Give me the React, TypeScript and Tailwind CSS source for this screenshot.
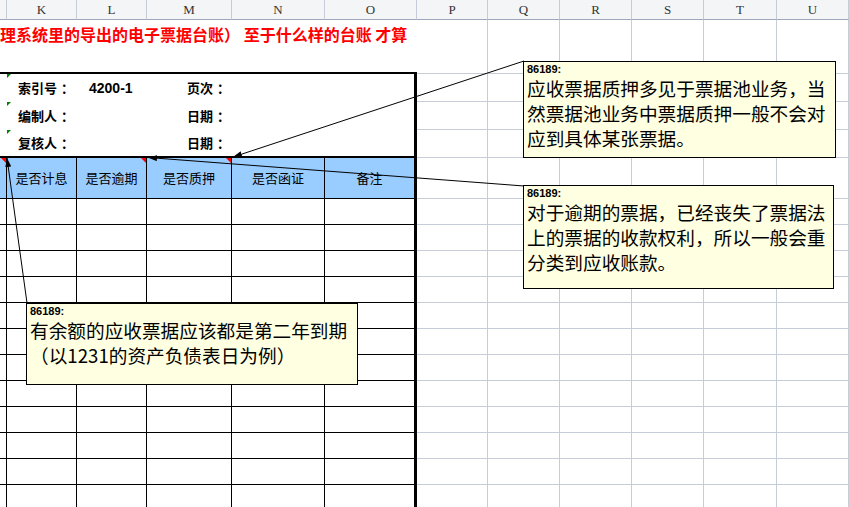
import clsx from 'clsx';

const TABLE_COLS = [
  { id: 'J', w: 'w-[7px]' },
  { id: 'K', w: 'w-[70px]' },
  { id: 'L', w: 'w-[70px]' },
  { id: 'M', w: 'w-[85px]' },
  { id: 'N', w: 'w-[93px]' },
  { id: 'O', w: 'w-[92px]' },
];

const SHEET_COLS = [
  { id: 'P', w: 'w-[71px]' },
  { id: 'Q', w: 'w-[72px]' },
  { id: 'R', w: 'w-[72px]' },
  { id: 'S', w: 'w-[72px]' },
  { id: 'T', w: 'w-[73px]' },
  { id: 'U', w: 'w-[72px]' },
];

const INFO = [
  { label: '索引号', value: '4200-1', right: '页次' },
  { label: '编制人', value: '', right: '日期' },
  { label: '复核人', value: '', right: '日期' },
];

const HEADS = [
  { id: 'J', w: 'w-[7px]', text: '', note: true },
  { id: 'K', w: 'w-[70px]', text: '是否计息', note: false },
  { id: 'L', w: 'w-[70px]', text: '是否逾期', note: true },
  { id: 'M', w: 'w-[85px]', text: '是否质押', note: true },
  { id: 'N', w: 'w-[93px]', text: '是否函证', note: false },
];

const DATA_ROWS = Array.from({ length: 12 }, (_, i) => i);

function SheetCells({ line = true }: { line?: boolean }) {
  return (
    <>
      {SHEET_COLS.map((c) => (
        <div
          key={c.id}
          className={clsx(c.w, 'h-full shrink-0 border-r border-[#c6ccd8]', line && 'border-b')}
        />
      ))}
    </>
  );
}

function RedMark() {
  return (
    <span className="absolute right-0 top-0 h-0 w-0 border-l-[5px] border-t-[5px] border-l-transparent border-t-[#ff0000]" />
  );
}

function GreenMark() {
  return (
    <span className="absolute left-0 top-0 h-0 w-0 border-r-[4px] border-t-[4px] border-r-transparent border-t-[#008000]" />
  );
}

// SimSun puts the full-width colon in the middle of its box
function Colon() {
  return <span className="pl-[4px]">：</span>;
}

function Comment({ className, lines }: { className: string; lines: string[] }) {
  return (
    <div className={clsx('absolute border border-black bg-[#ffffe1] pl-[3px] pt-[1px]', className)}>
      <div className="font-['Liberation_Sans',sans-serif] text-[11px] font-bold leading-[12px]">86189:</div>
      {lines.map((l) => (
        <div key={l} className="whitespace-nowrap text-[18.67px] leading-[25px]">
          {l}
        </div>
      ))}
    </div>
  );
}

export default function App() {
  return (
    <div className="relative h-[507px] w-[849px] overflow-hidden bg-white font-['Noto_Sans_CJK_SC',sans-serif] text-black">
      {/* column letters */}
      <div className="flex h-[20px] bg-[#f4f5f7]">
        {[...TABLE_COLS, ...SHEET_COLS].map((c) => (
          <div
            key={c.id}
            className={clsx(
              c.w,
              "flex shrink-0 items-center justify-center border-b border-r border-b-[#9ea7bb] border-r-[#c6ccd8] font-['Liberation_Serif',serif] text-[13px] text-[#333]"
            )}
          >
            {c.id === 'J' ? '' : c.id}
          </div>
        ))}
      </div>

      {/* title */}
      <div className="flex h-[28px]">
        <div className="flex w-[417px] shrink-0 items-center overflow-hidden whitespace-nowrap text-[16px] font-bold leading-none text-[#ff0000]">
          理系统里的导出的电子票据台账） 至于什么样的台账 才算
        </div>
        <SheetCells line={false} />
      </div>
      <div className="flex h-[26px]">
        <div className="w-[417px] shrink-0 border-b-2 border-black" />
        <SheetCells />
      </div>

      {/* info rows */}
      {INFO.map((r, i) => (
        <div key={r.label} className="flex h-[28px]">
          <div
            className={clsx(
              'flex w-[417px] shrink-0 items-center border-r-[3px] border-black text-[13px] font-bold',
              i === INFO.length - 1 && 'border-b-2'
            )}
          >
            <div className="w-[7px] shrink-0" />
            <div className="relative flex h-full w-[70px] shrink-0 items-center whitespace-nowrap pl-[11px]">
              <GreenMark />
              {r.label}
              <Colon />
            </div>
            <div className="w-[70px] shrink-0 pl-[12px] font-['Liberation_Sans',sans-serif] text-[14px]">
              {r.value}
            </div>
            <div className="w-[85px] shrink-0 whitespace-nowrap pr-[2px] text-right">
              {r.right}
              <Colon />
            </div>
          </div>
          <SheetCells />
        </div>
      ))}

      {/* header row */}
      <div className="flex h-[41px]">
        <div className="flex w-[417px] shrink-0 border-b border-r-[3px] border-black bg-[#99ccff] text-[13px]">
          {HEADS.map((h) => (
            <div
              key={h.id}
              className={clsx(h.w, 'relative flex shrink-0 items-center justify-center border-r border-black')}
            >
              {h.note && <RedMark />}
              {h.text}
            </div>
          ))}
          <div className="flex flex-1 items-center justify-center">备注</div>
        </div>
        <SheetCells />
      </div>

      {/* data rows */}
      {DATA_ROWS.map((r) => (
        <div key={r} className="flex h-[26px]">
          <div className="flex w-[417px] shrink-0 border-b border-r-[3px] border-black">
            {TABLE_COLS.slice(0, 5).map((c) => (
              <div key={c.id} className={clsx(c.w, 'shrink-0 border-r border-black')} />
            ))}
          </div>
          <SheetCells />
        </div>
      ))}

      {/* comment arrows */}
      <svg className="pointer-events-none absolute left-0 top-0" width="849" height="507">
        <defs>
          <marker
            id="ah"
            markerWidth="9"
            markerHeight="6"
            refX="9"
            refY="3"
            orient="auto"
            markerUnits="userSpaceOnUse"
          >
            <path d="M0,0 L9,3 L0,6 z" fill="#000" />
          </marker>
        </defs>
        <line x1="524" y1="61" x2="233" y2="157" stroke="#000" strokeWidth="1" markerEnd="url(#ah)" />
        <line x1="524" y1="186" x2="148" y2="157.5" stroke="#000" strokeWidth="1" markerEnd="url(#ah)" />
        <line x1="27" y1="303" x2="7" y2="158" stroke="#000" strokeWidth="1" markerEnd="url(#ah)" />
      </svg>

      <Comment
        className="left-[523px] top-[61px] h-[97px] w-[313px]"
        lines={['应收票据质押多见于票据池业务，当', '然票据池业务中票据质押一般不会对', '应到具体某张票据。']}
      />
      <Comment
        className="left-[523px] top-[185px] h-[104px] w-[311px]"
        lines={['对于逾期的票据，已经丧失了票据法', '上的票据的收款权利，所以一般会重', '分类到应收账款。']}
      />
      <Comment
        className="left-[26px] top-[303px] h-[82px] w-[332px]"
        lines={['有余额的应收票据应该都是第二年到期', '（以1231的资产负债表日为例）']}
      />
    </div>
  );
}
